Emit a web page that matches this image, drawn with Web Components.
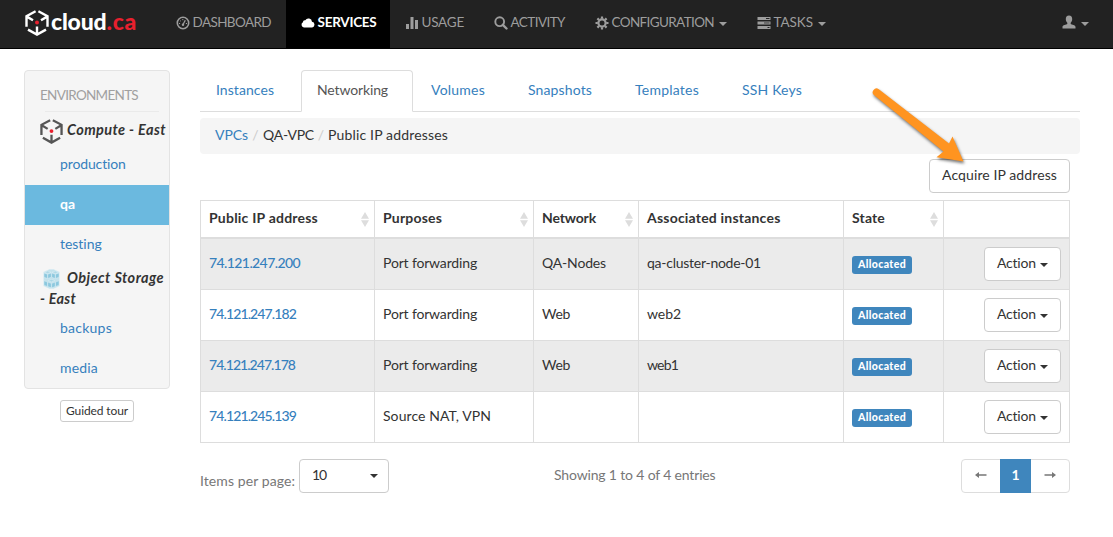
<!DOCTYPE html>
<html lang="en">
<head>
<meta charset="utf-8">
<title>cloud.ca</title>
<style>
html,body{margin:0;padding:0;background:#fff}
body{font:14px/20px Lato,"Open Sans",sans-serif;color:#333;height:537px;overflow:hidden}
</style>
</head>
<body>
<cloud-app></cloud-app>
<script>
const make = (name, html) => customElements.define(name, class extends HTMLElement {
  constructor(){
    super();
    const t = document.createElement('template');
    t.innerHTML = typeof html === 'function' ? html(this) : html;
    this.attachShadow({mode:'open'}).appendChild(t.content.cloneNode(true));
  }
});

const cube = (line, w) => `<svg viewBox="0 0 24 26" width="${w}" height="${w*26/24}" fill="none" stroke="${line}" stroke-width="2.4">
  <path d="M10.600 1.300 1.500 6.100v10.600M13.400 1.300l9.100 4.800v10.600M3 19.600l9 5 9-5M12 24v-7.600M1.800 6.600l6.200 3.700M22.200 6.600 16 10.300"/>
  <circle cx="12" cy="12.600" r="2" fill="#e8202e" stroke="none"/></svg>`;

const icons = {
  dash:`<svg width="14" height="14" viewBox="0 0 14 14" fill="none" stroke="currentColor"><circle cx="7" cy="7" r="5.700" stroke-width="1.600"/><path d="M7 8.500 9.300 4.200" stroke-width="1.300"/><circle cx="7" cy="8.700" r="1.200" fill="currentColor" stroke="none"/><path d="M3 7.500h1.100M4.200 4.600l.8.800M6.800 3v1.200M9.900 7.500H11" stroke-width="1"/></svg>`,
  cloud:`<svg width="14" height="14" viewBox="0 0 14 14" fill="currentColor"><path d="M3 11.500A2.800 2.800 0 0 1 1.900 6.300 2.100 2.100 0 0 1 4.300 4.300 3.600 3.600 0 0 1 11 5.800a2.900 2.900 0 0 1 .2 5.700z"/></svg>`,
  bars:`<svg width="14" height="14" viewBox="0 0 14 14" fill="currentColor"><path d="M1 8h3v5H1zM5.500 1h3v12h-3zM10 4h3v9h-3z"/></svg>`,
  search:`<svg width="14" height="14" viewBox="0 0 14 14" fill="none" stroke="currentColor"><circle cx="5.700" cy="5.700" r="4.400" stroke-width="1.900"/><path d="m8.800 8.800 3.700 3.700" stroke-width="2.400" stroke-linecap="round"/></svg>`,
  cog:`<svg width="14" height="14" viewBox="0 0 14 14" fill="none" stroke="currentColor"><circle cx="7" cy="7" r="3.600" stroke-width="2.200"/><path d="M7 .5v2.300M7 11.200v2.300M.5 7h2.300M11.200 7h2.300M2.400 2.400 4 4M10 10l1.600 1.600M2.400 11.600 4 10M10 4l1.600-1.600" stroke-width="2.200"/></svg>`,
  tasks:`<svg width="14" height="14" viewBox="0 0 14 14" fill="currentColor"><path fill-rule="evenodd" d="M.5 1h13v3H.5zM9 2v1h3.500V2zM.500 5.500h13v3H.500zM.500 10h13v3H.500zM10.500 11v1h2v-1z"/><path d="M7 6.200h5.500v1.500H7z" fill="#222" opacity=".5"/></svg>`,
  user:`<svg width="14" height="14" viewBox="0 0 14 14" fill="currentColor"><path d="M7 .5c2.200 0 3.300 1.500 3.200 3.700-.1 1.700-.6 2.700-1.500 3.500v1.400c1 .7 4.800 1 4.800 2.900v1.500H.5V12c0-1.900 3.800-2.200 4.800-2.900V7.700C4.400 6.900 3.900 5.900 3.800 4.200 3.700 2 4.800.5 7 .5z"/></svg>`
};

make('caret-down', `<style>:host{display:inline-block;width:0;height:0;border:4px solid transparent;border-top-color:currentColor;border-bottom:0;flex:none}</style>`);

make('nav-icon', el => `<style>:host{display:block;width:14px;height:14px;flex:none}svg{display:block}</style>${icons[el.getAttribute('name')]}`);

make('nav-item', `<style>
:host{display:flex;align-items:center;box-sizing:border-box;height:48px;padding:0 15px 3px;color:#9d9d9d;font-size:13.500px}
:host([active]){background:#000;color:#fff}
:host([active]) ::slotted(fit-text){font-weight:700}
</style><slot></slot>`);

make('top-bar', `<style>
:host{display:flex;height:48px;background:#222;border-bottom:1px solid #000}
.brand{display:flex;width:136px;padding-left:25px;align-items:center}
.brand svg{display:block;margin:-2px 2px 0 0}
.brand b{font-weight:900;font-size:23px;line-height:24px;display:flex;color:#fff;padding-bottom:4px}
.brand .ca{color:#e8202e}
nav{display:flex;flex:1}
fit-text{margin-left:2.500px}
caret-down{margin:2px 0 0 5px}
.user{margin-left:auto;padding-right:24px}
</style>
<div class="brand">${cube('#fff',24)}<b><fit-text w="55.500" style="margin:0">cloud</fit-text><fit-text class="ca" w="30.500" style="margin:0">.ca</fit-text></b></div>
<nav>
<nav-item><nav-icon name="dash"></nav-icon><fit-text w="78.500">DASHBOARD</fit-text></nav-item>
<nav-item active><nav-icon name="cloud"></nav-icon><fit-text w="59" style="margin-right:-1.500px">SERVICES</fit-text></nav-item>
<nav-item><nav-icon name="bars"></nav-icon><fit-text w="42.500">USAGE</fit-text></nav-item>
<nav-item><nav-icon name="search"></nav-icon><fit-text w="54.500">ACTIVITY</fit-text></nav-item>
<nav-item><nav-icon name="cog"></nav-icon><fit-text w="102.500">CONFIGURATION</fit-text><caret-down></caret-down></nav-item>
<nav-item><nav-icon name="tasks"></nav-icon><fit-text w="39.500">TASKS</fit-text><caret-down></caret-down></nav-item>
<nav-item class="user"><nav-icon name="user" style="margin-top:-2px"></nav-icon><caret-down></caret-down></nav-item>
</nav>`);

make('env-link', `<style>
:host{display:flex;align-items:center;height:40px;padding-left:35px;color:#3680bd}
:host([active]){background:#6bb9df;color:#fff;font-weight:700}
</style><slot></slot>`);

make('side-bar', `<style>
:host{display:flex;flex-direction:column;align-items:flex-start;width:146px}
.well{box-sizing:border-box;width:146px;height:319px;background:#f5f5f5;border:1px solid #e3e3e3;border-radius:4px;padding-top:15px}
.head{color:#a0a0a0;padding-left:15px;height:20px;font-size:13.500px}
hr{border:0;border-top:1px solid #eaeaea;margin:5px 10px 0 20px}
.group{padding:9px 0 0 15px;display:flex;font-weight:700;font-style:italic;height:24px;font-size:14.500px}
.group svg{display:block;flex:none;margin:-2px 4px 0 0}
.obj{height:39px;flex-wrap:wrap;align-content:flex-start;padding-top:4px;row-gap:1px;line-height:20px}
.obj svg{margin-top:0}
.guide{box-sizing:border-box;width:74px;height:22px;margin:11px 0 0 36px;padding-top:2px;border:1px solid #ccc;border-radius:3px;display:flex;align-items:center;justify-content:center;font-size:12px;background:#fff}
</style>
<div class="well">
<div class="head"><fit-text w="98">ENVIRONMENTS</fit-text></div><hr>
<div class="group">${cube('#555',23)}<fit-text w="99">Compute - East</fit-text></div>
<env-link><fit-text w="66">production</fit-text></env-link>
<env-link active><fit-text w="15">qa</fit-text></env-link>
<env-link><fit-text w="42">testing</fit-text></env-link>
<div class="group obj"><svg width="23" height="20" viewBox="0 0 23 20" stroke="#e6f3f7" stroke-width=".4" stroke-linejoin="round"><path d="M3.500 3 9.500.3h4L19.500 3v14l-6 2.700h-4l-6-2.700z" fill="#c3e2ec"/><g fill="#8cc8de"><path d="M4 4l3.500 1.300v4.200L4 8.200zM7.800 5.300 11.300 4v4.200L7.800 9.500zM11.700 4l3.500 1.300v4.200l-3.500-1.300zM15.500 5.300 19 4v4.200l-3.500 1.300zM4 11.800l3.500 1.300v4.400L4 16.200zM7.800 13.100l3.500 1.300v4.400l-3.500-1.300zM11.700 14.400l3.500-1.300v4.400l-3.500 1.300zM15.500 13.100 19 11.800v4.400l-3.500 1.300z"/></g><path d="M4.500 3.300 7.700 2l3.300 1.300-3.300 1.200zM12 3.300 15.300 2l3.200 1.300-3.200 1.200zM8.300 11.600l3.200-1.300 3.200 1.300-3.200 1.300z" fill="#add8e6"/></svg><fit-text w="97">Object Storage</fit-text><fit-text w="36">- East</fit-text></div>
<env-link style="margin-top:1px"><fit-text w="52">backups</fit-text></env-link>
<env-link><fit-text w="38">media</fit-text></env-link>
</div>
<div class="guide"><fit-text w="62">Guided tour</fit-text></div>`);

make('tab-item', `<style>
:host{display:block;box-sizing:border-box;height:42px;margin-right:2px;padding:10px 24px 0 15px;border:1px solid transparent;color:#3680bd}
:host([active]){color:#555;background:#fff;border-color:#ddd #ddd #fff;border-radius:4px 4px 0 0}
</style><slot></slot>`);

make('tab-strip', `<style>:host{display:flex;height:41px;border-bottom:1px solid #ddd}</style><slot></slot>`);

make('crumb-bar', `<style>
:host{display:flex;align-items:center;box-sizing:border-box;height:36px;padding:0 15px;margin-top:6px;background:#f5f5f5;border-radius:4px}
a{color:#3680bd}i{font-style:normal;color:#ccc;width:15px;text-align:center;padding-bottom:2px}
</style><a><fit-text w="33">VPCs</fit-text></a><i>/</i><fit-text w="51">QA-VPC</fit-text><i style="width:14px">/</i><fit-text w="120">Public IP addresses</fit-text>`);

make('push-button', `<style>
:host{display:flex;align-items:center;justify-content:center;box-sizing:border-box;height:34px;background:#fff;border:1px solid #ccc;border-radius:4px;color:#333}
</style><slot></slot>`);

make('sort-mark', `<style>:host{display:block;margin-left:auto;width:8px;height:15px}svg{display:block}</style><svg width="8" height="15" fill="#ddd"><path d="M0 6.700 4 0l4 6.700zM0 8.300h8L4 15z"/></svg>`);

make('state-label', `<style>:host{display:flex;align-items:center;justify-content:center;width:60px;height:18px;margin-top:2px;border-radius:3px;background:#3f86bd;color:#fff;font-size:10.500px;font-weight:900;line-height:16px}</style><fit-text w="48">Allocated</fit-text>`);

const rows = [
  ['74.121.247.200',91,'Port forwarding',94,'QA-Nodes',64,'qa-cluster-node-01',114],
  ['74.121.247.182',87,'Port forwarding',94,'Web',28,'web2',34],
  ['74.121.247.178',86,'Port forwarding',94,'Web',28,'web1',31],
  ['74.121.245.139',87,'Source NAT, VPN',108,'',0,'',0]
];
const cell = (t,w) => `<div>${t ? `<fit-text w="${w}">${t}</fit-text>` : ''}</div>`;
make('ip-table', `<style>
:host{display:block;width:870px;margin-top:7px}
.r{display:grid;grid-template-columns:174px 159px 105px 205px 100px 127px;box-sizing:border-box;height:51px;border-bottom:1px solid #ddd}
.r>div{display:flex;align-items:center;border-left:1px solid #ddd;padding:0 5px 0 8px}
.r>div:last-child{border-right:1px solid #ddd;justify-content:flex-end;padding-right:8px}
.h{height:39px;border-top:1px solid #ddd;border-bottom:2px solid #ddd;font-weight:700}
.odd{background:#ebebeb}
.r:not(.h)>div:first-child{color:#3680bd;font-weight:500}
push-button{width:77px}
</style>
<div class="r h">
<div><fit-text w="109">Public IP address</fit-text><sort-mark></sort-mark></div>
<div><fit-text w="59">Purposes</fit-text><sort-mark></sort-mark></div>
<div><fit-text w="54">Network</fit-text><sort-mark></sort-mark></div>
<div><fit-text w="133.500">Associated instances</fit-text></div>
<div><fit-text w="33">State</fit-text><sort-mark></sort-mark></div><div></div></div>
${rows.map((r,i)=>`<div class="r ${i%2?'':'odd'}">${cell(r[0],r[1])}${cell(r[2],r[3])}${cell(r[4],r[5])}${cell(r[6],r[7])}<div><state-label></state-label></div><div><push-button><fit-text w="39">Action</fit-text><caret-down style="margin:2px 0 0 4px"></caret-down></push-button></div></div>`).join('')}`);

make('table-footer', `<style>
:host{display:flex;width:870px;height:34px;margin-top:16px;color:#777}
.per{display:flex;width:189px}
.per>fit-text{margin:13px 4px 0 0}
push-button{width:90px;justify-content:space-between;padding:0 10px 0 12px}
.info{padding:7px 0 0 165px}
.pages{margin-left:auto;box-sizing:border-box;width:109px;height:34px;display:grid;grid-template-columns:38px 31px 38px;border:1px solid #ddd;border-radius:4px}
.pages>*{display:flex;align-items:center;justify-content:center}
.pages span svg{margin-top:-2px}
.pages b{background:#3f86bd;color:#fff;margin:-1px 0}
</style>
<div class="per"><fit-text w="95">Items per page:</fit-text><push-button><fit-text w="14">10</fit-text><caret-down></caret-down></push-button></div>
<div class="info"><fit-text w="161.500">Showing 1 to 4 of 4 entries</fit-text></div>
<div class="pages"><span><svg width="12" height="8" viewBox="0 0 12 8"><path d="M0 4 4 1v2.300h7.500v1.400H4V7z" fill="#777"/></svg></span><b><fit-text w="8">1</fit-text></b><span><svg width="12" height="8" viewBox="0 0 12 8"><path d="M12 4 8 1v2.300H.5v1.400H8V7z" fill="#777"/></svg></span></div>`);

make('pointer-arrow', `<style>:host{position:absolute;left:866px;top:82px;width:110px;height:95px;pointer-events:none}svg{display:block;filter:drop-shadow(1px 2px 1.500px rgba(0,0,0,.55))}</style>
<svg width="110" height="95"><path d="M12.800 7.300 83 61.500 86.500 54.500 97.500 79.500 70.500 75.200 77.500 69.500 8.200 13.200A3.700 3.700 0 0 1 12.800 7.300z" fill="#ff9420"/></svg>`);

make('cloud-app', `<style>
:host{display:block;position:relative}
main{display:flex;padding:21px 33px 0 24px;gap:30px}
section{width:880px}
.tools{display:flex;justify-content:flex-end;padding:5px 10px 0 0}
.tools push-button{width:141px}
</style>
<top-bar></top-bar>
<main><side-bar></side-bar>
<section>
<tab-strip><tab-item><fit-text w="58">Instances</fit-text></tab-item><tab-item active><fit-text w="71">Networking</fit-text></tab-item><tab-item><fit-text w="54">Volumes</fit-text></tab-item><tab-item><fit-text w="64">Snapshots</fit-text></tab-item><tab-item><fit-text w="64">Templates</fit-text></tab-item><tab-item><fit-text w="60">SSH Keys</fit-text></tab-item></tab-strip>
<crumb-bar></crumb-bar>
<div class="tools"><push-button><fit-text w="115">Acquire IP address</fit-text></push-button></div>
<ip-table></ip-table>
<table-footer></table-footer>
</section></main>
<pointer-arrow></pointer-arrow>`);

/* Text run tracked so that it fills the width given in its w attribute. */
customElements.define('fit-text', class extends HTMLElement {
  constructor(){
    super();
    this.attachShadow({mode:'open'}).innerHTML = '<style>:host{display:block;white-space:nowrap;flex:none}span{display:inline-block;transform:translateY(-1px)}</style><span><slot></slot></span>';
  }
  connectedCallback(){
    const w = parseFloat(this.getAttribute('w')), s = this.shadowRoot.querySelector('span');
    const n = this.textContent.length;
    const nat = s.getBoundingClientRect().width;
    this.style.width = w + 'px';
    s.style.letterSpacing = ((w - nat) / n).toFixed(3) + 'px';
  }
});
</script>
</body>
</html>
